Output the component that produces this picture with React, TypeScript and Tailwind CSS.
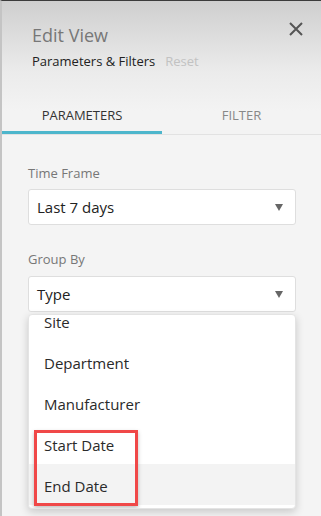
import React from 'react'

const font = { fontFamily: '"Open Sans", "Liberation Sans", sans-serif' }

function Caret() {
  return (
    <svg width="8" height="7" viewBox="0 0 8 7" className="shrink-0">
      <path d="M0 0 H8 L4 7 Z" fill="#666" />
    </svg>
  )
}

function Select({ value }: { value: string }) {
  return (
    <div className="flex h-[36px] items-center justify-between rounded-[3px] border border-[#dedede] bg-white pl-[8px] pr-[12px]">
      <span className="text-[15px] leading-[20px] text-[#222]">{value}</span>
      <Caret />
    </div>
  )
}

const options = ['Site', 'Department', 'Manufacturer', 'Start Date', 'End Date']

export default function App() {
  return (
    <div
      className="flex h-[516px] w-[321px] flex-col overflow-hidden border-l-2 border-t border-l-[#c4c4c4] border-t-[#3c3c3c] bg-[#f4f4f4]"
      style={font}
    >
      {/* header */}
      <div className="bg-[linear-gradient(to_bottom,#cfcfcf_0px,#ebebeb_70px,#f3f3f3_110px)]">
        <div className="flex items-start justify-between pl-[30px] pr-[17px] pt-[22px]">
          <div>
            <h1 className="text-[18px] leading-[24px] text-[#777]">Edit View</h1>
            <div className="mt-[5px] flex gap-[10px] text-[13px] leading-[18px]">
              <span className="text-[#222]">Parameters &amp; Filters</span>
              <span className="text-[#c2c2c2]">Reset</span>
            </div>
          </div>
          <svg width="16" height="16" viewBox="0 0 16 16" className="-mt-[2px]">
            <path d="M2 2 L14 14 M14 2 L2 14" stroke="#555" strokeWidth="2" />
          </svg>
        </div>

        {/* tabs */}
        <div className="mt-[22px] flex border-b border-[#e2e2e2] text-[13px] leading-[18px]">
          <div className="w-[160px] border-b-[3px] border-[#4db6cc] pb-[7px] pt-[14px] text-center text-[#333]">
            PARAMETERS
          </div>
          <div className="flex-1 pb-[7px] pt-[14px] text-center text-[#888]">FILTER</div>
        </div>
      </div>

      {/* body */}
      <div className="flex flex-col pl-[26px] pr-[25px] pt-[29px]">
        <label className="text-[13px] leading-[18px] text-[#777]">Time Frame</label>
        <div className="mt-[7px]">
          <Select value="Last 7 days" />
        </div>

        <label className="mt-[25px] text-[13px] leading-[18px] text-[#777]">Group By</label>
        <div className="mt-[8px]">
          <Select value="Type" />
        </div>

        {/* open dropdown, scrolled a little */}
        <div className="relative mt-[2px] h-[195px] overflow-hidden rounded-[4px] border border-[#e4e4e4] bg-white shadow-[0_3px_8px_rgba(0,0,0,0.18)]">
          <ul className="-mt-[15px] text-[15px] leading-[20px] text-[#2a2a2a]">
            {options.map((o, i) => (
              <li
                key={o}
                className={
                  'flex h-[41px] items-center pl-[15px] pt-[2px] ' +
                  (i === options.length - 1 ? 'bg-[#f3f3f3]' : '')
                }
              >
                {o}
              </li>
            ))}
          </ul>
          <div className="absolute left-[5px] top-[115px] h-[76px] w-[104px] border-[3px] border-[#f04848] shadow-[0_2px_4px_rgba(0,0,0,0.25)]" />
        </div>
      </div>
    </div>
  )
}
